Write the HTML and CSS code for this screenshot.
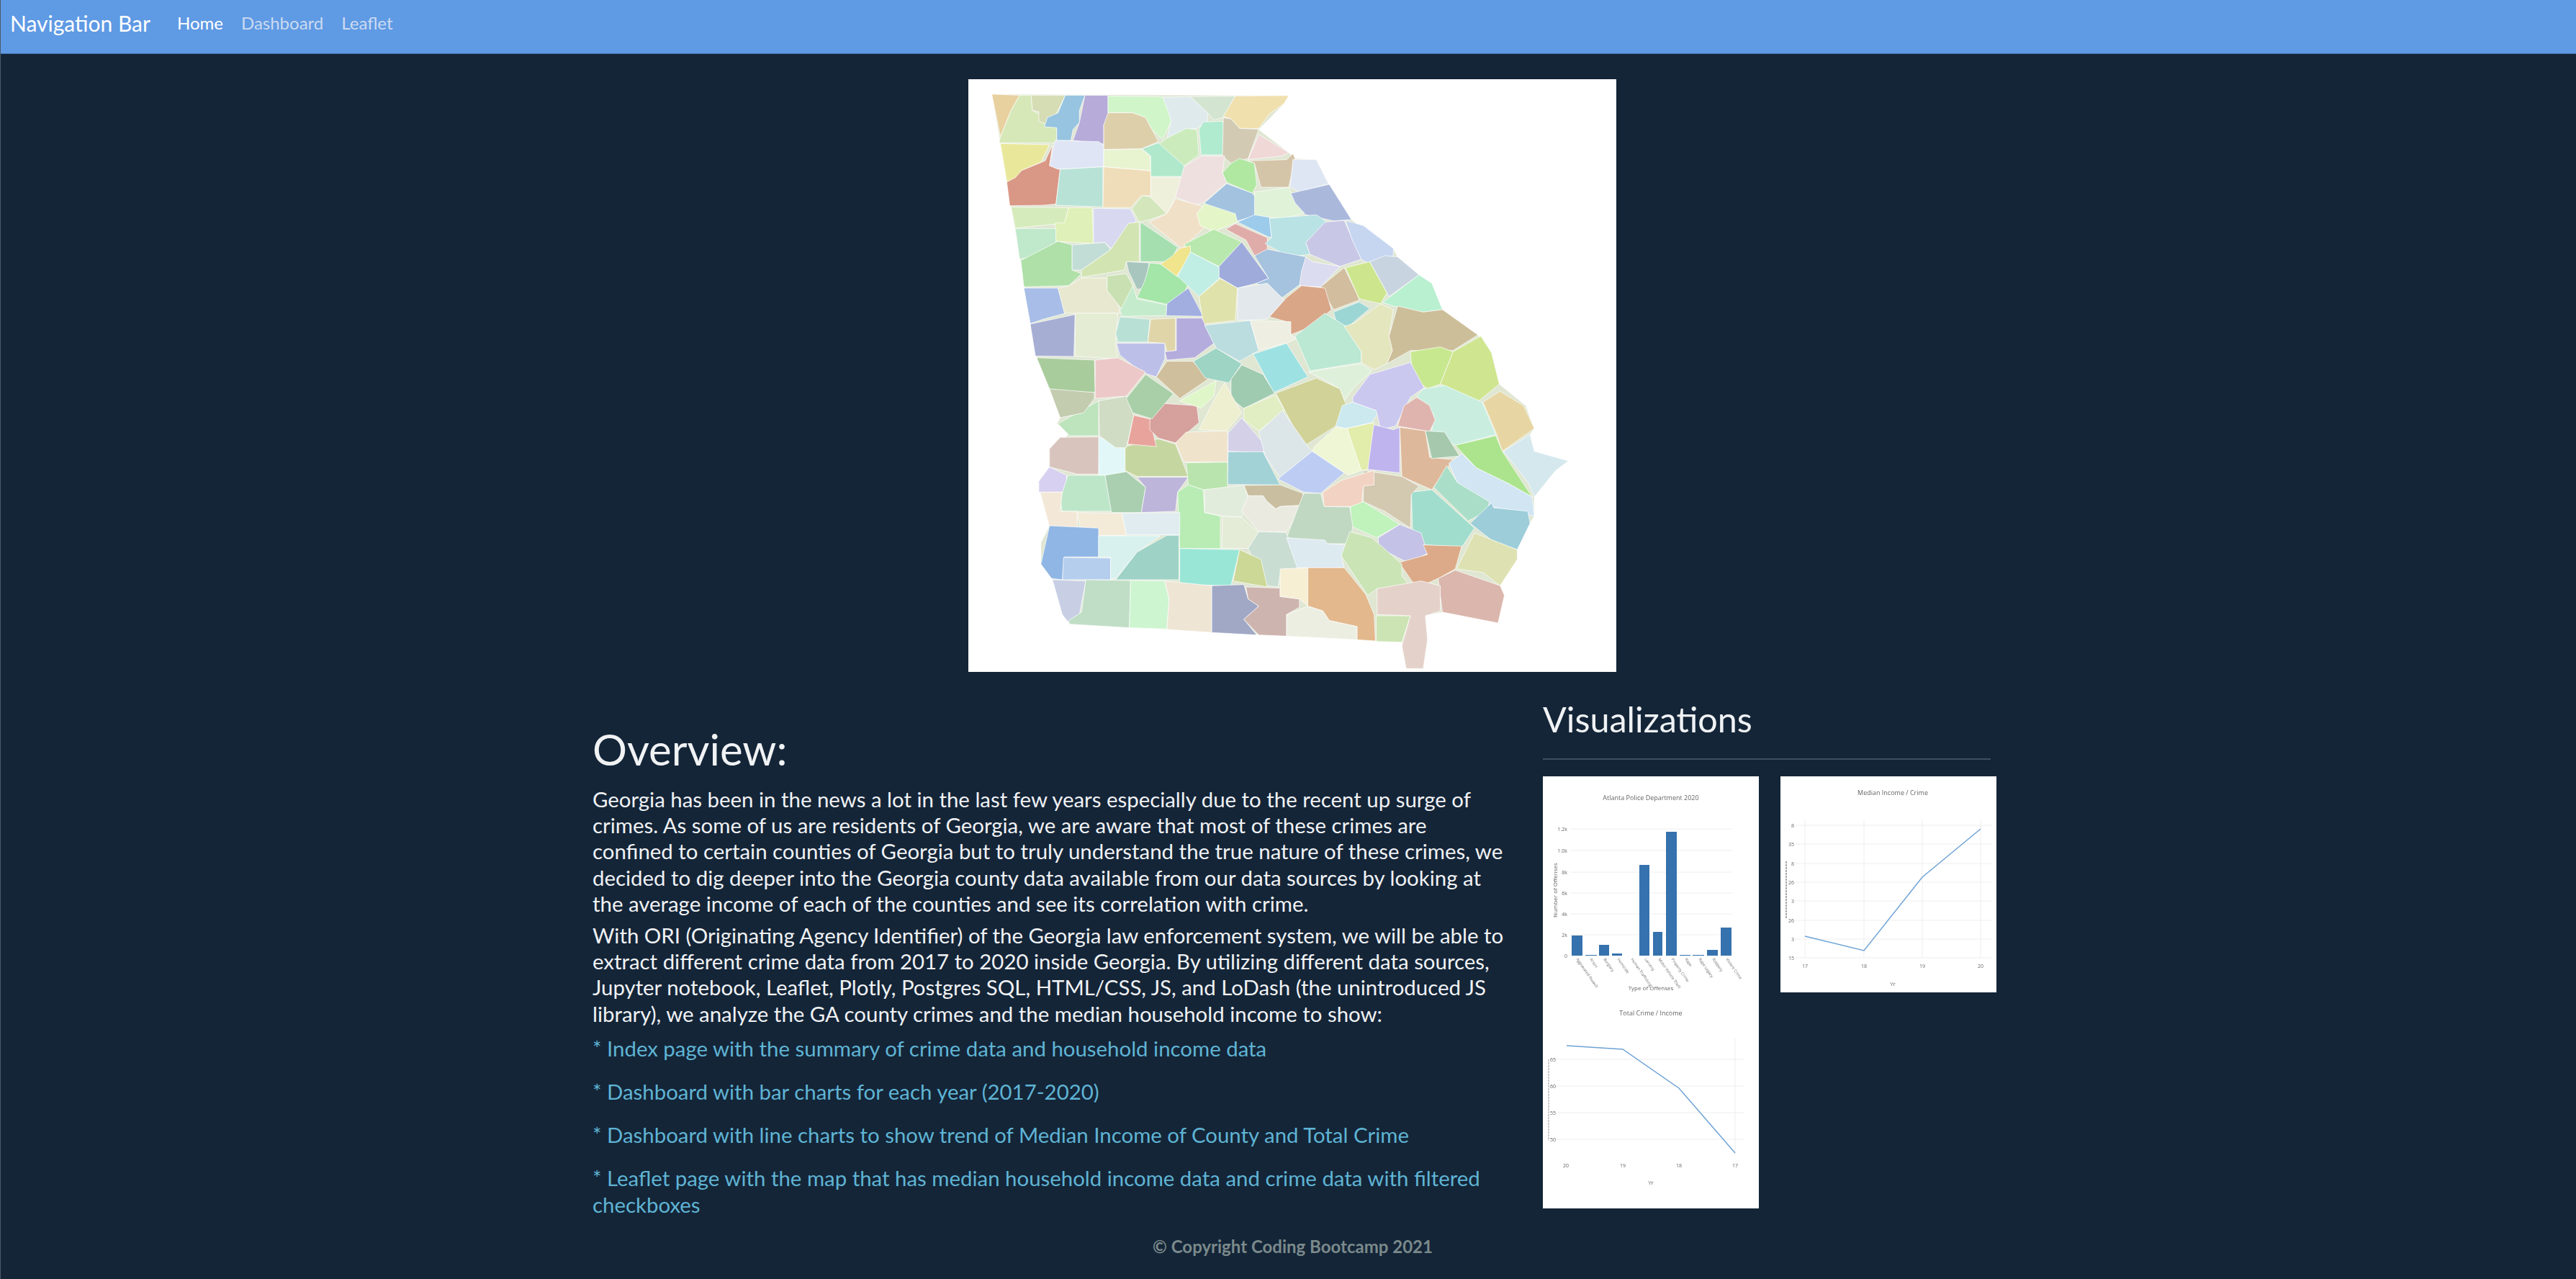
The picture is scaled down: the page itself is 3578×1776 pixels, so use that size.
FILE: index.html
```html
<!DOCTYPE html>
<html lang="en">
<head>
    <meta charset="UTF-8">
    <meta name="viewport" content="width=device-width, initial-scale=1.0">
    <title>Georgia Crime Data</title>
    <link rel="stylesheet" href="styles.css">
</head>
<body>
    <nav class="navbar">
        <a class="brand" href="#">Navigation Bar</a>
        <a class="nav-link active" href="#">Home</a>
        <a class="nav-link" href="#">Dashboard</a>
        <a class="nav-link" href="#">Leaflet</a>
    </nav>

    <div class="map-box">
        <svg class="map" viewBox="25 30 1517 2469" preserveAspectRatio="none">
            <!-- state outline sits under the counties so no white shows through -->
            <polygon class="state" points="80,92 775,98 765,130 705,240 775,335 790,360 840,365 868,465 922,615 1020,735 1030,770 1080,845 1110,880 1135,990 1218,1095 1250,1170 1268,1300 1330,1390 1350,1485 1340,1510 1350,1580 1430,1620 1400,1660 1350,1770 1350,1850 1340,1880 1310,1990 1310,2030 1270,2140 1280,2180 1265,2295 1135,2250 1095,2265 1100,2365 1090,2485 1050,2485 1040,2375 262,2300 245,2260 222,2115 195,2050 195,1960 215,1890 193,1750 190,1705 215,1645 215,1570 260,1510 232,1465 240,1440 215,1320 185,1190"/>
            <!-- north half of the state -->
            <g>
                <polygon fill="#e8d09f" points="80,92 145,97 125,160 100,270"/>
                <polygon fill="#d6e8b8" points="145,97 172,97 175,160 205,190 232,235 232,295 97,295 100,270 125,160"/>
                <polygon fill="#d6dcb4" points="172,97 252,97 232,170 205,215 190,205 190,165 175,160"/>
                <polygon fill="#97c4e0" points="252,97 298,97 285,160 285,210 270,240 265,285 232,285 232,232 203,228 210,190 235,170"/>
                <polygon fill="#b6abd9" points="298,97 352,97 352,170 360,185 342,220 342,300 270,285 285,210"/>
                <polygon fill="#cff5c8" points="352,100 480,103 495,150 500,205 480,280 455,240 440,190 410,170 352,170"/>
                <polygon fill="#deeaec" points="480,105 545,103 585,170 585,205 560,235 535,240 490,275 500,205 490,150"/>
                <polygon fill="#d3e4d0" points="545,103 650,100 622,190 600,200 585,170"/>
                <polygon fill="#f0e0ae" points="650,100 775,98 765,130 730,175 705,235 660,235 640,195 622,185"/>
                <polygon fill="#dccfaa" points="342,322 342,220 352,170 410,170 440,190 455,240 470,290 430,320"/>
                <polygon fill="#b0ebd0" points="565,240 575,208 620,205 630,240 625,345 570,345"/>
                <polygon fill="#cbebbd" points="490,275 535,235 560,240 565,345 530,390 480,340 472,300"/>
                <polygon fill="#d3cab4" points="622,190 640,195 660,235 705,238 680,360 640,380 620,350"/>
                <polygon fill="#f0d8d7" points="705,260 775,335 760,350 680,365"/>
                <polygon fill="#e9e79a" points="100,298 215,303 195,375 150,410 135,455 115,455"/>
                <polygon fill="#d99786" points="222,305 205,370 150,410 135,440 115,458 122,557 200,555 230,550 240,405 215,390"/>
                <polygon fill="#dfe5f4" points="228,285 330,290 342,305 342,395 235,405 215,390"/>
                <polygon fill="#e8f3d0" points="342,325 430,320 450,350 452,410 342,395"/>
                <polygon fill="#b0e8cc" points="432,320 470,295 530,390 530,435 452,435 452,350"/>
                <polygon fill="#b8e2d6" points="240,405 340,395 340,562 230,555"/>
                <polygon fill="#eeddb8" points="342,395 452,412 452,515 430,515 405,565 340,565"/>
                <polygon fill="#eff0dc" points="452,438 540,438 545,470 510,520 490,590 452,555"/>
                <polygon fill="#efe0e0" points="530,395 570,350 625,350 620,420 630,460 575,545 555,555 510,520"/>
                <polygon fill="#b0e8a2" points="620,420 640,380 660,360 695,380 700,470 690,505 630,460"/>
                <polygon fill="#d5c5a8" points="680,370 770,365 785,340 790,360 775,480 710,480 695,380"/>
                <polygon fill="#dfe6f3" points="785,365 840,365 868,465 800,500 778,480"/>
                <polygon fill="#a2c2e0" points="578,545 630,465 690,505 705,540 695,600 655,620 590,575"/>
                <polygon fill="#e0f2d8" points="695,500 775,480 810,590 760,610 730,605 695,600"/>
                <polygon fill="#aab8dc" points="780,505 870,468 922,615 880,620 815,595 790,545"/>
                <polygon fill="#d6ebbb" points="125,562 260,565 250,630 135,650"/>
                <polygon fill="#dff0b8" points="260,565 315,565 318,715 230,705 228,630 250,628"/>
                <polygon fill="#d8d8f0" points="318,568 405,570 418,620 360,735 345,710 318,712"/>
                <polygon fill="#d4e6bc" points="408,570 432,515 450,520 490,590 450,615 425,625"/>
                <polygon fill="#f1e0c8" points="510,528 575,560 560,590 580,645 525,735 448,625 490,590"/>
                <polygon fill="#e4f6c8" points="560,590 578,548 650,590 655,625 600,665 568,640"/>
                <polygon fill="#9ccbeb" points="655,625 695,595 730,605 735,690 725,685"/>
                <polygon fill="#e0aca9" points="628,655 650,632 725,690 725,745 695,765 675,700"/>
                <polygon fill="#b8e2e4" points="730,610 840,595 865,625 815,710 825,760 775,770 720,715 735,690"/>
                <polygon fill="#b8e8ad" points="530,718 600,655 665,708 612,810 545,750"/>
                <polygon fill="#c8c8e6" points="860,625 905,618 945,780 895,810 825,760 815,710"/>
                <polygon fill="#c6d5f0" points="908,618 950,640 1020,735 1020,765 960,795 945,780 925,705"/>
                <polygon fill="#c0e8cb" points="135,652 230,652 230,705 225,750 145,780"/>
                <polygon fill="#aee0a8" points="148,785 235,705 268,720 268,825 290,840 260,890 155,895"/>
                <polygon fill="#c2ddd6" points="268,720 345,710 358,740 290,825 268,825"/>
                <polygon fill="#d2e4b2" points="425,625 425,790 395,790 390,825 290,855 290,825 358,740 400,630"/>
                <polygon fill="#a5dfb0" points="428,625 515,730 498,790 428,790"/>
                <polygon fill="#f0e48c" points="545,725 545,770 512,850 475,800 500,770 520,735"/>
                <polygon fill="#a8c6bd" points="395,790 448,795 440,900 420,905 400,830"/>
                <polygon fill="#a4e5a8" points="450,795 475,800 512,850 542,875 530,920 490,968 420,940 438,870"/>
                <polygon fill="#c0ede4" points="545,750 612,812 612,860 565,935 515,850"/>
                <polygon fill="#9eabdb" points="665,708 728,860 700,880 655,900 612,855 612,810"/>
                <polygon fill="#a5c2de" points="695,765 725,738 815,770 805,880 760,940 700,880 728,860"/>
                <polygon fill="#dcdcf0" points="815,770 830,790 895,810 850,895 800,890 805,830"/>
                <polygon fill="#d2bd9e" points="905,815 935,925 940,950 880,990 850,895"/>
                <polygon fill="#cde68e" points="908,815 965,790 1005,920 990,965 940,945"/>
                <polygon fill="#c8d4e0" points="965,790 1000,765 1030,770 1080,845 1010,935"/>
                <polygon fill="#b8f0d0" points="1080,845 1110,880 1135,990 1090,1000 1020,975 995,960"/>
                <polygon fill="#a8bee8" points="155,900 235,900 252,1005 200,1030 170,1048"/>
                <polygon fill="#e8e8d0" points="235,900 260,890 290,858 350,858 350,900 375,960 380,1005 250,1005"/>
                <polygon fill="#c8e0b2" points="350,850 395,840 410,890 405,980 385,990 350,910"/>
                <polygon fill="#c4eccc" points="410,890 420,945 490,970 488,1015 385,1018 380,995"/>
                <polygon fill="#a2aee0" points="540,900 575,1018 488,1015 490,965"/>
                <polygon fill="#e0e2ac" points="565,935 615,860 655,900 650,1035 575,1050"/>
                <polygon fill="#e2e8ec" points="655,900 725,880 765,950 725,1030 655,1035"/>
                <polygon fill="#d9a688" points="730,1020 770,940 805,890 860,900 875,990 830,1060 778,1095 770,1040"/>
                <polygon fill="#9cd6d4" points="880,1000 940,958 965,985 915,1060 888,1050"/>
                <polygon fill="#a6aed4" points="170,1050 275,1010 272,1185 182,1183"/>
                <polygon fill="#e4ecd4" points="275,1005 375,1005 370,1130 375,1195 275,1185"/>
                <polygon fill="#b8e0d4" points="380,1020 450,1030 445,1125 375,1125 370,1090"/>
                <polygon fill="#e0d5a8" points="452,1030 510,1025 510,1160 490,1165 485,1130 445,1125"/>
                <polygon fill="#b4acdc" points="512,1025 572,1025 600,1130 555,1190 490,1200 485,1165 512,1160"/>
                <polygon fill="#bcdde0" points="578,1055 685,1035 705,1160 660,1205 605,1150"/>
                <polygon fill="#eeefe2" points="685,1035 780,1040 780,1095 795,1110 770,1130 705,1160"/>
                <polygon fill="#bae8d2" points="790,1100 860,1005 910,1060 945,1165 945,1210 825,1245"/>
                <polygon fill="#e4e6be" points="905,1060 930,1045 990,965 1020,990 1010,1100 1018,1160 1005,1215 975,1240 945,1210 945,1165"/>
                <polygon fill="#cdbe9a" points="1030,975 1090,1000 1135,990 1218,1095 1160,1160 1060,1160 1005,1215 1018,1160 1010,1100"/>
                <polygon fill="#c8e890" points="1060,1165 1130,1145 1160,1165 1130,1300 1100,1320 1065,1270"/>
                <polygon fill="#cfe590" points="1160,1165 1225,1100 1250,1170 1268,1300 1220,1370 1130,1300"/>
                <polygon fill="#bcc0e8" points="372,1130 485,1130 485,1195 465,1270 430,1250 380,1180"/>
                <polygon fill="#a9cc9c" points="185,1190 320,1200 322,1335 260,1330 215,1320"/>
                <polygon fill="#ecc9c8" points="322,1200 375,1190 440,1250 395,1350 322,1360"/>
                <polygon fill="#d0bf9c" points="465,1270 490,1205 550,1205 590,1275 520,1360"/>
                <polygon fill="#9ed4c4" points="552,1205 605,1150 665,1215 635,1295 580,1275"/>
                <polygon fill="#9de1e2" points="692,1175 770,1130 820,1270 740,1335"/>
                <polygon fill="#dff0da" points="820,1250 870,1235 945,1215 970,1245 925,1320 905,1370 895,1320 850,1275"/>
            </g>
            <!-- south half, shifted down to meet the north half -->
            <g transform="translate(0,1260)">
                <polygon fill="#9fcbb0" points="640,20 665,-40 715,0 742,78 670,142 640,100"/>
                <polygon fill="#d0d298" points="745,78 840,15 895,60 910,130 885,215 810,300"/>
                <polygon fill="#e1eec3" points="670,140 745,85 765,150 705,235 670,190"/>
                <polygon fill="#cbe9ef" points="885,215 900,130 925,115 980,150 985,160 970,200 908,225"/>
                <polygon fill="#cac8ef" points="925,95 965,0 1060,-50 1092,55 1060,95 1025,215 990,230 980,150 925,115"/>
                <polygon fill="#c9eee0" points="1090,60 1140,45 1228,115 1260,250 1165,295 1110,235 1115,170 1075,90"/>
                <polygon fill="#e7d6a3" points="1230,115 1270,70 1325,130 1350,225 1275,320 1262,250"/>
                <polygon fill="#e0b4ae" points="1075,95 1105,130 1118,190 1105,238 1030,215 1045,130"/>
                <polygon fill="#bfb4ee" points="965,205 1020,230 1035,220 1035,410 960,395"/>
                <polygon fill="#e2ecab" points="912,225 975,200 960,395 945,400 925,300"/>
                <polygon fill="#eef6d5" points="835,300 885,220 912,225 945,400 915,420 830,320"/>
                <polygon fill="#deb89a" points="1035,220 1095,235 1105,345 1160,355 1110,480 1040,425"/>
                <polygon fill="#a6c8ac" points="1095,235 1140,240 1175,340 1110,350"/>
                <polygon fill="#ace48e" points="1165,295 1260,255 1275,320 1345,510 1290,455 1215,390"/>
                <polygon fill="#d5e8ee" points="1278,320 1340,250 1350,320 1430,360 1400,400 1350,510 1335,450"/>
                <polygon fill="#d1e5f3" points="1150,370 1180,330 1215,390 1290,455 1345,510 1350,590 1250,550 1170,450"/>
                <polygon fill="#aadec8" points="1115,470 1145,380 1170,450 1245,530 1240,570 1195,610"/>
                <polygon fill="#9ccdd9" points="1200,620 1250,535 1255,555 1335,570 1340,620 1310,730 1250,690"/>
                <polygon fill="#a1ddcd" points="1062,490 1110,480 1210,640 1180,720 1095,710 1065,650"/>
                <polygon fill="#d3c8b0" points="950,400 1040,425 1080,465 1062,500 1060,640 1000,570 950,530"/>
                <polygon fill="#f2d2c2" points="855,490 900,440 975,400 975,460 950,465 945,550 858,550"/>
                <polygon fill="#c0f2bc" points="920,550 950,530 1035,625 980,680 920,630"/>
                <polygon fill="#c4c2e6" points="985,680 1035,625 1085,660 1100,745 1055,785 985,720"/>
                <polygon fill="#dcaa88" points="1090,710 1180,715 1165,810 1130,845 1075,890 1040,800 1020,790 1100,750"/>
                <polygon fill="#dee2b2" points="1168,810 1210,660 1310,730 1310,770 1270,880 1230,825"/>
                <polygon fill="#dbb6ac" points="1125,850 1165,815 1270,880 1280,920 1265,1035 1135,990"/>
                <polygon fill="#d8d0f0" points="190,445 215,385 255,420 255,490 190,490"/>
                <polygon fill="#d8c4bc" points="215,310 240,262 332,260 330,415 280,415 215,385"/>
                <polygon fill="#e2f8f8" points="330,260 392,305 392,420 330,420"/>
                <polygon fill="#bde6c8" points="258,420 345,420 360,570 245,570 240,520"/>
                <polygon fill="#a9cfb0" points="345,420 395,405 440,470 430,575 360,575"/>
                <polygon fill="#bdb6da" points="420,428 540,428 515,490 510,570 430,575 440,470"/>
                <polygon fill="#c6d6a0" points="392,300 470,268 510,290 540,425 420,425 392,400"/>
                <polygon fill="#e8a49c" points="398,290 412,170 450,185 465,300"/>
                <polygon fill="#d6a09c" points="450,180 475,120 560,130 565,200 510,285 470,265 450,230"/>
                <polygon fill="#d0dcc4" points="330,110 395,90 412,170 395,305 370,305 332,255"/>
                <polygon fill="#bde4bc" points="235,205 330,110 330,255 262,255"/>
                <polygon fill="#c4ccb0" points="215,60 320,75 320,100 295,160 240,180"/>
                <polygon fill="#a9cfa8" points="395,100 440,0 505,80 455,185 410,160"/>
                <polygon fill="#dff6c8" points="520,110 605,25 600,90 570,140"/>
                <polygon fill="#eeeed0" points="565,230 605,90 625,35 665,160 630,235"/>
                <polygon fill="#efe3cc" points="510,285 535,240 632,235 632,365 530,365"/>
                <polygon fill="#b9e4ae" points="535,368 632,365 632,480 575,480 540,460"/>
                <polygon fill="#d4d0e8" points="633,245 665,180 720,295 715,325 633,320"/>
                <polygon fill="#a2d2d6" points="633,322 715,322 755,460 632,458"/>
                <polygon fill="#dce6e8" points="705,240 760,150 820,300 830,320 755,430 720,340"/>
                <polygon fill="#bcccf2" points="750,435 830,320 905,410 850,495 810,490"/>
                <polygon fill="#c9bfa0" points="670,462 755,460 808,495 808,545 755,550 745,560 725,530 680,505"/>
                <polygon fill="#b8ecb4" points="515,490 540,460 575,480 578,575 615,590 615,725 520,725"/>
                <polygon fill="#e2ecdc" points="578,480 670,460 680,510 665,595 620,590 578,575"/>
                <polygon fill="#eaeae0" points="665,570 680,505 715,505 725,530 745,560 755,550 808,545 770,655 705,655"/>
                <polygon fill="#c0d8c2" points="810,495 850,495 858,550 918,552 925,630 918,705 860,705 770,680"/>
                <polygon fill="#e4ecd8" points="620,590 665,595 705,660 680,725 618,725"/>
                <polygon fill="#c9ddd2" points="680,725 705,655 768,658 795,750 795,810 755,830 750,885 725,880"/>
                <polygon fill="#ddeaf0" points="770,680 860,690 865,705 918,710 898,755 905,805 795,805"/>
                <polygon fill="#cbe4b6" points="898,755 918,655 970,680 1040,790 1040,840 1062,888 982,892 960,920"/>
                <polygon fill="#f3e8d8" points="193,490 245,490 240,570 280,570 280,640 215,635"/>
                <polygon fill="#f3ead8" points="280,575 385,578 395,670 290,670"/>
                <polygon fill="#e0ecf0" points="385,578 520,575 520,668 395,668"/>
                <polygon fill="#8fb6e4" points="215,630 330,640 330,760 250,760 245,855 220,850 195,790"/>
                <polygon fill="#b6ceee" points="248,762 358,765 358,855 245,855"/>
                <polygon fill="#d8f1ee" points="330,672 475,672 420,740 370,850 358,855 358,762 330,760"/>
                <polygon fill="#9fd2c6" points="490,670 518,670 518,855 370,855 420,740"/>
                <polygon fill="#99e6d6" points="520,725 660,730 640,880 520,875"/>
                <polygon fill="#ccd896" points="660,730 710,770 725,885 645,860"/>
                <polygon fill="#c8cee4" points="222,855 300,860 285,1000 258,1030 245,1000"/>
                <polygon fill="#c0dec6" points="300,855 405,858 402,1055 262,1040 260,1025 290,990"/>
                <polygon fill="#cdf5d0" points="405,858 485,860 495,935 490,1060 402,1055"/>
                <polygon fill="#efe5d4" points="485,860 595,880 595,1075 490,1062 495,935"/>
                <polygon fill="#a0a8c6" points="595,880 670,875 680,935 705,965 670,1020 700,1085 595,1075"/>
                <polygon fill="#ceb4ae" points="675,885 755,890 755,925 800,935 800,970 770,1000 770,1090 705,1085 670,1020 705,965 680,935"/>
                <polygon fill="#f6efd4" points="755,810 820,805 820,965 800,935 755,925"/>
                <polygon fill="#e2b88c" points="820,805 905,805 955,915 975,1000 978,1110 935,1105 935,1050 870,1025 855,985 820,965"/>
                <polygon fill="#edeee2" points="770,1000 820,965 855,985 870,1025 935,1050 935,1105 770,1090"/>
                <polygon fill="#cce4b4" points="980,1005 1060,1005 1040,1115 980,1112"/>
                <polygon fill="#e4d2ca" points="982,892 1085,860 1130,880 1130,985 1095,1005 1100,1105 1090,1225 1050,1225 1040,1130 1060,1005 982,1000"/>
            </g>
        </svg>
    </div>

    <div class="content">
        <section class="overview">
            <h1>Overview:</h1>
            <p class="intro">Georgia has been in the news a lot in the last few years especially due to the recent up surge of crimes. As some of us are residents of Georgia, we are aware that most of these crimes are confined to certain counties of Georgia but to truly understand the true nature of these crimes, we decided to dig deeper into the Georgia county data available from our data sources by looking at the average income of each of the counties and see its correlation with crime.</p>
            <p class="intro intro-last">With ORI (Originating Agency Identifier) of the Georgia law enforcement system, we will be able to extract different crime data from 2017 to 2020 inside Georgia. By utilizing different data sources, Jupyter notebook, Leaflet, Plotly, Postgres SQL, HTML/CSS, JS, and LoDash (the unintroduced JS library), we analyze the GA county crimes and the median household income to show:</p>
            <p class="feature">* Index page with the summary of crime data and household income data</p>
            <p class="feature">* Dashboard with bar charts for each year (2017-2020)</p>
            <p class="feature">* Dashboard with line charts to show trend of Median Income of County and Total Crime</p>
            <p class="feature">* Leaflet page with the map that has median household income data and crime data with filtered checkboxes</p>
        </section>

        <aside class="visuals">
            <h2>Visualizations</h2>
            <hr>
            <div class="gallery">
                <svg class="chart" viewBox="0 0 300 300">
                    <text class="chart-title" x="150" y="33">Atlanta Police Department 2020</text>
                    <g class="grid">
                        <line x1="38" y1="73" x2="263" y2="73"/>
                        <line x1="38" y1="103" x2="263" y2="103"/>
                        <line x1="38" y1="133" x2="263" y2="133"/>
                        <line x1="38" y1="162" x2="263" y2="162"/>
                        <line x1="38" y1="191" x2="263" y2="191"/>
                        <line x1="38" y1="220" x2="263" y2="220"/>
                    </g>
                    <g class="tick-end">
                        <text x="34" y="76">1.2k</text>
                        <text x="34" y="106">1.0k</text>
                        <text x="34" y="136">8k</text>
                        <text x="34" y="165">6k</text>
                        <text x="34" y="194">4k</text>
                        <text x="34" y="223">2k</text>
                        <text x="34" y="252">0</text>
                    </g>
                    <g class="bars">
                        <rect x="40" y="221" width="15" height="28"/>
                        <rect x="59" y="248" width="16" height="1"/>
                        <rect x="78" y="234" width="14" height="15"/>
                        <rect x="96" y="246" width="14" height="3"/>
                        <rect x="134" y="123" width="14" height="126"/>
                        <rect x="153" y="216" width="13" height="33"/>
                        <rect x="171" y="77" width="15" height="172"/>
                        <rect x="190" y="248" width="15" height="1"/>
                        <rect x="208" y="248" width="16" height="1"/>
                        <rect x="228" y="241" width="15" height="8"/>
                        <rect x="247" y="210" width="15" height="39"/>
                    </g>
                    <g class="tick-slant">
                        <text transform="translate(46,254) rotate(55)">Aggravated Assault</text>
                        <text transform="translate(65,254) rotate(55)">Arson</text>
                        <text transform="translate(84,254) rotate(55)">Burglary</text>
                        <text transform="translate(103,254) rotate(55)">Homicide</text>
                        <text transform="translate(122,254) rotate(55)">Human Trafficking</text>
                        <text transform="translate(141,254) rotate(55)">Larceny</text>
                        <text transform="translate(160,254) rotate(55)">Motor Vehicle Theft</text>
                        <text transform="translate(178,254) rotate(55)">Property Crime</text>
                        <text transform="translate(197,254) rotate(55)">Rape</text>
                        <text transform="translate(216,254) rotate(55)">Rape Legacy</text>
                        <text transform="translate(235,254) rotate(55)">Robbery</text>
                        <text transform="translate(254,254) rotate(55)">Violent Crime</text>
                    </g>
                    <text class="axis-title" x="150" y="297">Type of Offenses</text>
                    <text class="axis-title" transform="translate(20,158) rotate(-90)">Number of Offenses</text>
                </svg>

                <svg class="chart" viewBox="0 0 300 300">
                    <text class="chart-title" x="156" y="26">Median Income / Crime</text>
                    <g class="grid">
                        <line x1="20" y1="68" x2="293" y2="68"/>
                        <line x1="20" y1="94" x2="293" y2="94"/>
                        <line x1="20" y1="121" x2="293" y2="121"/>
                        <line x1="20" y1="147" x2="293" y2="147"/>
                        <line x1="20" y1="173" x2="293" y2="173"/>
                        <line x1="20" y1="200" x2="293" y2="200"/>
                        <line x1="20" y1="226" x2="293" y2="226"/>
                        <line x1="20" y1="252" x2="293" y2="252"/>
                        <line x1="34" y1="60" x2="34" y2="252"/>
                        <line x1="116" y1="60" x2="116" y2="252"/>
                        <line x1="197" y1="60" x2="197" y2="252"/>
                        <line x1="278" y1="60" x2="278" y2="252"/>
                    </g>
                    <g class="tick-end">
                        <text x="19" y="71">8</text>
                        <text x="19" y="97">35</text>
                        <text x="19" y="124">8</text>
                        <text x="19" y="150">26</text>
                        <text x="19" y="176">3</text>
                        <text x="19" y="203">26</text>
                        <text x="19" y="229">3</text>
                        <text x="19" y="255">15</text>
                    </g>
                    <polyline class="trend" points="34,222 116,242 197,140 278,73"/>
                    <g class="tick-mid">
                        <text x="34" y="266">17</text>
                        <text x="116" y="266">18</text>
                        <text x="197" y="266">19</text>
                        <text x="278" y="266">20</text>
                    </g>
                    <text class="axis-title" x="156" y="291">Yr</text>
                    <line class="axis-mark" x1="8" y1="118" x2="8" y2="197"/>
                </svg>

                <svg class="chart" viewBox="0 0 300 298">
                    <text class="chart-title" x="150" y="31">Total Crime / Income</text>
                    <g class="grid">
                        <line x1="14" y1="92" x2="280" y2="92"/>
                        <line x1="14" y1="129" x2="280" y2="129"/>
                        <line x1="14" y1="166" x2="280" y2="166"/>
                        <line x1="14" y1="203" x2="280" y2="203"/>
                        <line x1="267" y1="63" x2="267" y2="225"/>
                    </g>
                    <g class="tick-end">
                        <text x="18" y="95">65</text>
                        <text x="18" y="132">60</text>
                        <text x="18" y="169">55</text>
                        <text x="18" y="206">50</text>
                    </g>
                    <polyline class="trend" points="33,73 111,78 189,132 267,222"/>
                    <g class="tick-mid">
                        <text x="32" y="242">20</text>
                        <text x="111" y="242">19</text>
                        <text x="189" y="242">18</text>
                        <text x="267" y="242">17</text>
                    </g>
                    <text class="axis-title" x="150" y="266">Yr</text>
                    <line class="axis-mark thin" x1="8" y1="92" x2="8" y2="205"/>
                </svg>
            </div>
        </aside>
    </div>

    <footer>&copy; Copyright Coding Bootcamp 2021</footer>
</body>
</html>
```

FILE: styles.css
```css
html, body {
    margin: 0;
    padding: 0;
}

body {
    min-height: 1776px;
    box-sizing: border-box;
    background: #142538;
    border-left: 1px solid #4b5a68;
    color: #f0f2f4;
    font-family: Lato, "Open Sans", sans-serif;
    font-size: 24px;
    line-height: 36px;
    overflow: hidden;
}

.navbar {
    display: flex;
    align-items: center;
    height: 74px;
    box-sizing: content-box;
    padding: 0 13px;
    background: #5f9ae4;
    border-bottom: 1px solid #4470a5;
}

.brand {
    margin: -10px 37px 0 0;
    color: #fff;
    font-size: 30px;
    text-decoration: none;
}

.nav-link {
    margin: -10px 25px 0 0;
    color: #cbdaf1;
    text-decoration: none;
}

.nav-link.active {
    color: #fff;
}

.map-box {
    width: 900px;
    height: 823px;
    margin: 35px 0 0 1344px;
    background: #fff;
}

.map {
    display: block;
    width: 100%;
    height: 100%;
    filter: blur(0.5px);
}

.map polygon {
    stroke: #fff;
    stroke-width: 0.7px;
    vector-effect: non-scaling-stroke;
}

.map .state {
    fill: #dfe6d2;
}

.content {
    display: flex;
    width: 1951px;
    box-sizing: border-box;
    margin: 0 auto;
    padding-left: 9px;
}

.overview {
    flex: 0 0 1320px;
    box-sizing: border-box;
    padding: 71px 47px 0 0;
}

h1 {
    margin: 0 0 16px;
    font-size: 60px;
    font-weight: 400;
    line-height: 72px;
}

h2 {
    margin: 0;
    font-size: 48.5px;
    font-weight: 400;
    line-height: 58px;
}

p {
    margin: 0;
    font-size: 29.4px;
    line-height: 36.2px;
}

.intro {
    margin-bottom: 8px;
}

.intro-last {
    margin-bottom: 12px;
}

.feature {
    margin-bottom: 24px;
    color: #5fb4d4;
}

.visuals {
    flex: 1;
    min-width: 0;
    padding-top: 36px;
}

hr {
    margin: 26px 0 23px;
    border: 0;
    border-top: 2px solid #3d4f60;
}

.gallery {
    display: grid;
    grid-template-columns: 300px 300px;
    column-gap: 30px;
    align-items: start;
}

.chart {
    display: block;
    width: 300px;
    height: 300px;
    background: #fff;
    filter: blur(0.7px);
    font-family: "Open Sans", sans-serif;
}

.chart text {
    fill: #666;
    font-size: 7px;
}

.chart .tick-slant text {
    font-size: 5.5px;
}

.chart .chart-title {
    font-size: 9px;
    text-anchor: middle;
}

.chart .axis-title {
    font-size: 8px;
    text-anchor: middle;
}

.grid line {
    stroke: #eee;
    stroke-width: 1;
}

.tick-end text {
    text-anchor: end;
}

.tick-mid text {
    text-anchor: middle;
}

.bars rect {
    fill: #3672ad;
}

.trend {
    fill: none;
    stroke: #6fa3d6;
    stroke-width: 1.5;
}

.axis-mark {
    stroke: #555;
    stroke-width: 1;
    stroke-dasharray: 3 1;
}

.axis-mark.thin {
    stroke: #999;
}

footer {
    margin-top: -2px;
    padding-left: 12px;
    color: #7b8a8b;
    font-weight: 700;
    font-size: 24px;
    text-align: center;
}
```
